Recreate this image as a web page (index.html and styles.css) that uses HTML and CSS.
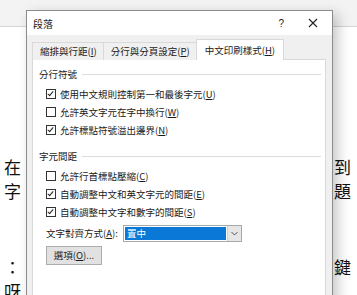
FILE: index.html
```html
<!DOCTYPE html>
<html>
<head>
<meta charset="utf-8">
<link rel="stylesheet" href="styles.css">
</head>
<body>
<div class="topbar"></div>
<div class="doc">
  <div class="line"><span>在</span><span>到</span></div>
  <div class="line"><span>字</span><span>題</span></div>
  <div class="line l3"><span>：</span><span>鍵</span></div>
  <div class="line"><span>呀</span><span></span></div>
</div>

<div class="dialog">
  <div class="titlebar">
    <span class="title">段落</span>
    <span class="help">?</span>
    <svg class="close" width="10" height="10" viewBox="0 0 10 10"><path d="M1 1L9 9M9 1L1 9" stroke="#222" stroke-width="1.1"/></svg>
  </div>
  <div class="body">
    <div class="tabs">
      <div class="tab">縮排與行距(<u>I</u>)</div>
      <div class="tab">分行與分頁設定(<u>P</u>)</div>
      <div class="tab active">中文印刷樣式(<u>H</u>)</div>
    </div>
    <div class="panel">
      <div class="group">
        <div class="legend"><span>分行符號</span><i></i></div>
        <label class="row"><span class="box on"></span>使用中文規則控制第一和最後字元(<u>U</u>)</label>
        <label class="row"><span class="box"></span>允許英文字元在字中換行(<u>W</u>)</label>
        <label class="row"><span class="box on"></span>允許標點符號溢出邊界(<u>N</u>)</label>
      </div>
      <div class="group g2">
        <div class="legend"><span>字元間距</span><i></i></div>
        <label class="row"><span class="box"></span>允許行首標點壓縮(<u>C</u>)</label>
        <label class="row"><span class="box on"></span>自動調整中文和英文字元的間距(<u>E</u>)</label>
        <label class="row"><span class="box on"></span>自動調整中文字和數字的間距(<u>S</u>)</label>
      </div>
      <div class="align">
        <span class="albl">文字對齊方式(<u>A</u>):</span>
        <div class="select">
          <span class="val">置中</span>
          <span class="drop"><svg width="7" height="5" viewBox="0 0 7 5"><path d="M0.5 1L3.5 4L6.5 1" fill="none" stroke="#555" stroke-width="1"/></svg></span>
        </div>
      </div>
      <div class="btn">選項(<u>O</u>)...</div>
    </div>
  </div>
</div>
</body>
</html>
```

FILE: styles.css
```css
html, body {
  margin: 0;
  padding: 0;
}
body {
  width: 357px;
  height: 295px;
  overflow: hidden;
  position: relative;
  background: #ffffff;
  font-family: "Noto Sans CJK TC", "Noto Sans", sans-serif;
}
.topbar {
  height: 26px;
  background: #f3f3f3;
  border-bottom: 1px solid #d4d4d4;
}
.doc {
  padding-top: 128px;
  padding-left: 4px;
  padding-right: 6px;
  font-family: "Noto Sans CJK TC", serif;
  font-size: 17px;
  color: #111;
}
.line {
  display: flex;
  justify-content: space-between;
  height: 24px;
  line-height: 24px;
}
.line.l3 {
  margin-top: 52px;
}
.dialog {
  position: absolute;
  left: 26px;
  top: 10px;
  width: 305px;
  height: 300px;
  border: 1px solid #8c8c8c;
  background: #f0f0f0;
  box-shadow: 5px 4px 12px rgba(0,0,0,0.22);
  font-size: 9.5px;
  color: #1a1a1a;
}
.titlebar {
  height: 24px;
  background: #ffffff;
  display: flex;
  align-items: center;
  position: relative;
}
.title {
  padding-left: 6px;
  font-size: 10px;
  flex: 1;
}
.help {
  font-family: "Liberation Sans", sans-serif;
  font-size: 10px;
  margin-right: 24px;
}
.close {
  margin-right: 14px;
}
.body {
  padding: 4px 6px 0 5px;
}
.tabs {
  display: flex;
  align-items: flex-end;
  height: 21px;
  margin-bottom: -1px;
  position: relative;
  z-index: 1;
}
.tab {
  height: 17px;
  line-height: 17px;
  padding: 0 6px 0 7px;
  border: 1px solid #d9d9d9;
  border-bottom: none;
  border-right: none;
  background: #f0f0f0;
  white-space: nowrap;
}
.tab.active {
  height: 20px;
  line-height: 20px;
  background: #ffffff;
  border-right: 1px solid #d9d9d9;
  padding: 0 8px 0 8px;
}
.panel {
  background: #ffffff;
  border: 1px solid #d9d9d9;
  height: 260px;
  padding: 7px 4px 0 6px;
}
.legend {
  display: flex;
  align-items: center;
  height: 14px;
  margin-bottom: 4px;
}
.legend i {
  flex: 1;
  height: 1px;
  background: #dcdcdc;
  margin-left: 5px;
}
.row {
  display: flex;
  align-items: center;
  height: 18px;
  padding-left: 7px;
  white-space: nowrap;
}
.box {
  width: 8px;
  height: 8px;
  border: 1px solid #333;
  background: #fff;
  margin-right: 4px;
  position: relative;
  flex: none;
}
.box.on::after {
  content: "";
  position: absolute;
  left: 2px;
  top: 0px;
  width: 2px;
  height: 5px;
  border-right: 1px solid #222;
  border-bottom: 1px solid #222;
  transform: rotate(40deg);
}
.g2 {
  margin-top: 10px;
}
.align {
  display: flex;
  align-items: center;
  margin-top: 3px;
  padding-left: 7px;
  height: 18px;
}
.albl {
  width: 77px;
}
.select {
  display: flex;
  width: 116px;
  height: 15px;
  border: 1px solid #a9a9a9;
  background: #fff;
  padding: 0 0 0 1px;
}
.val {
  flex: 1;
  margin: 1px 1px 1px 0;
  background: #0a78d7;
  color: #fff;
  line-height: 13px;
  padding-left: 2px;
}
.drop {
  width: 13px;
  background: #e6e6e6;
  border-left: 1px solid #cfcfcf;
  display: flex;
  align-items: center;
  justify-content: center;
}
.btn {
  margin-top: 4px;
  margin-left: 7px;
  width: 54px;
  height: 17px;
  line-height: 17px;
  border: 1px solid #adadad;
  background: #e1e1e1;
  text-align: center;
}
```
